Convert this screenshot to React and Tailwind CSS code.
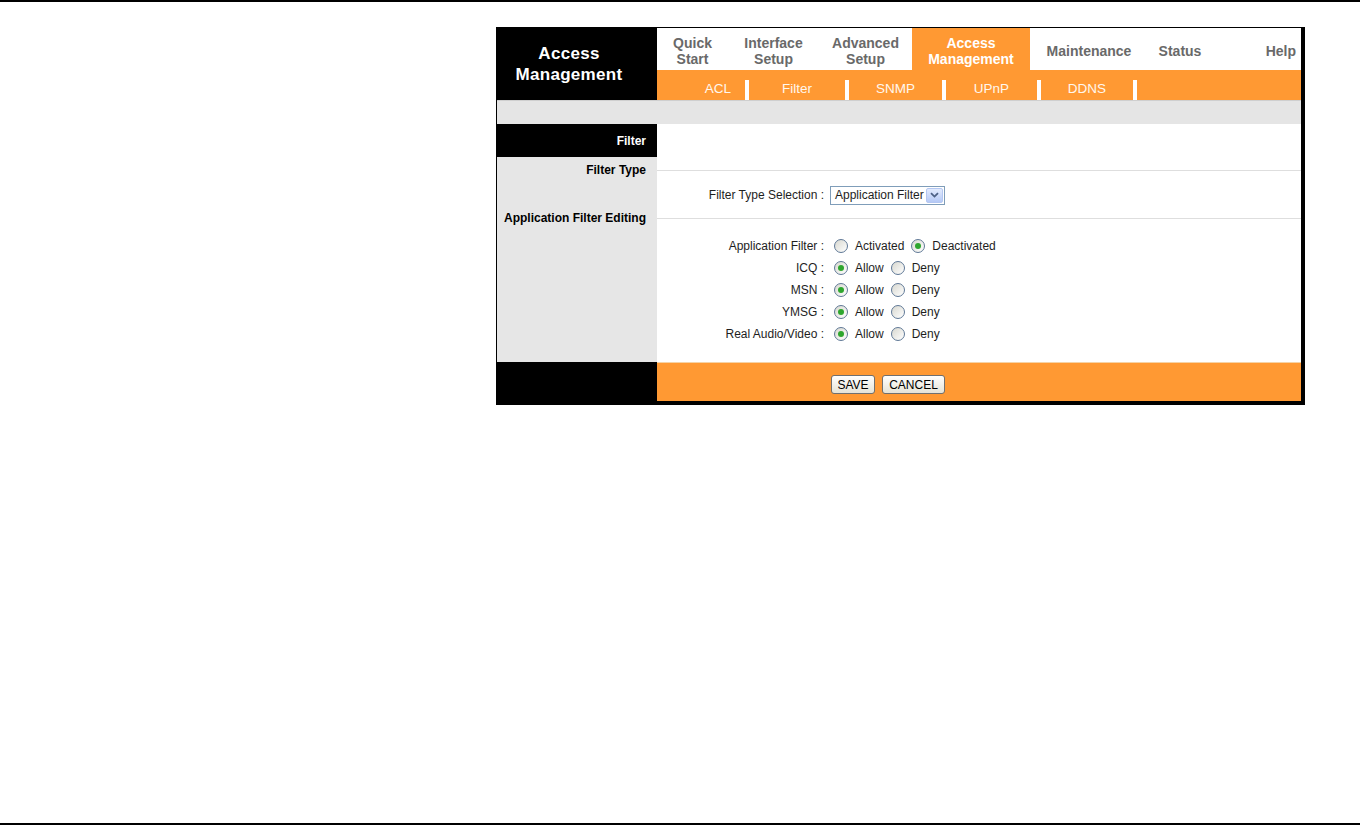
import React from "react";

const ORANGE = "bg-[#ff9933]";

const Radio = ({ checked }) => (
  <span className="inline-flex h-[14px] w-[14px] shrink-0 items-center justify-center rounded-full border border-[#5f7896] bg-gradient-to-br from-[#d8d8d0] to-white">
    {checked && <span className="h-[6px] w-[6px] rounded-full bg-[#2ea62e]" />}
  </span>
);

const RadioRow = ({ label, a, b, first }) => (
  <div className="flex h-[22px] items-center">
    <div className="w-[168px] pr-[1px] text-right">{label}</div>
    <div className="ml-[9px] flex items-center">
      <Radio checked={!first} />
      <span className="ml-[7px] mr-[7px]">{a}</span>
      <Radio checked={first} />
      <span className="ml-[7px]">{b}</span>
    </div>
  </div>
);

const Button = ({ children, w }) => (
  <button
    className={`h-[19px] ${w} rounded-[3px] border border-[#707070] bg-gradient-to-b from-white to-[#e6e3d6] text-[12px] leading-none text-black`}
  >
    {children}
  </button>
);

export default function App() {
  return (
    <div className="flex h-[825px] w-[1360px] flex-col bg-white font-['Liberation_Sans',Arial,sans-serif]">
      <div className="h-[2px] bg-black" />

      <div className="flex-1 pl-[496px] pt-[25px]">
        <div className="w-[809px] border-b-4 border-l border-r-4 border-t border-black">
          {/* header */}
          <div className="flex h-[72px]">
            <div className="flex w-[160px] items-center justify-center bg-black pr-[16px] text-center text-[17px] font-bold leading-[21px] tracking-[0.3px] text-white">
              Access
              <br />
              Management
            </div>
            <div className="flex flex-1 flex-col">
              <div className="flex h-[42px] text-[14px] font-bold leading-[16px] text-[#696969]">
                <div className="flex w-[71px] items-center justify-center pt-[3px] text-center">
                  Quick
                  <br />
                  Start
                </div>
                <div className="flex w-[91px] items-center justify-center pt-[3px] text-center">
                  Interface
                  <br />
                  Setup
                </div>
                <div className="flex w-[93px] items-center justify-center pt-[3px] text-center">
                  Advanced
                  <br />
                  Setup
                </div>
                <div className={`flex w-[118px] items-center justify-center ${ORANGE} pt-[3px] text-center text-white`}>
                  Access
                  <br />
                  Management
                </div>
                <div className="flex w-[118px] items-center justify-center pt-[3px]">Maintenance</div>
                <div className="flex w-[64px] items-center justify-center pt-[3px]">Status</div>
                <div className="flex flex-1 items-center justify-end pr-[5px] pt-[3px]">Help</div>
              </div>
              <div className={`flex h-[30px] ${ORANGE} text-[13.5px] leading-[15px] text-[#fff7ee]`}>
                <div className="w-[88px] pl-[34px] pt-[11px] text-center">ACL</div>
                <div className="mt-[10px] w-[4px] bg-white" />
                <div className="w-[96px] pt-[11px] text-center">Filter</div>
                <div className="mt-[10px] w-[4px] bg-white" />
                <div className="w-[93px] pt-[11px] text-center">SNMP</div>
                <div className="mt-[10px] w-[4px] bg-white" />
                <div className="w-[91px] pt-[11px] text-center">UPnP</div>
                <div className="mt-[10px] w-[4px] bg-white" />
                <div className="w-[92px] pt-[11px] text-center">DDNS</div>
                <div className="mt-[10px] w-[4px] bg-white" />
                <div className="flex-1" />
              </div>
            </div>
          </div>

          {/* gray bar */}
          <div className="h-[24px] border-t border-[#cfcfcf] bg-[#e5e5e5]" />

          {/* body */}
          <div className="flex text-[12px] text-[#1e1e1e]">
            <div className="flex w-[160px] flex-col bg-[#e6e6e6] text-right text-[12px] font-bold text-black">
              <div className="flex h-[33px] items-center justify-end bg-black pr-[11px] text-white">Filter</div>
              <div className="flex h-[26px] items-center justify-end pr-[11px]">Filter Type</div>
              <div className="h-[24px]" />
              <div className="flex h-[22px] items-center justify-end pr-[11px]">Application Filter Editing</div>
              <div className="flex-1" />
            </div>

            <div className="flex flex-1 flex-col">
              <div className="h-[33px]" />
              <div className="flex h-[26px] items-center">
                <div className="h-[1px] w-full bg-[#dedede]" />
              </div>
              <div className="flex h-[24px] items-center">
                <div className="w-[168px] pr-[1px] text-right">Filter Type Selection :</div>
                <div className="ml-[5px] flex h-[19px] w-[115px] items-center justify-between border border-[#7f9db9] bg-white pl-[4px] pr-[1px]">
                  <span>Application Filter</span>
                  <span className="flex h-[15px] w-[17px] items-center justify-center rounded-[2px] border border-[#b4c7f2] bg-gradient-to-b from-[#e3ebfd] to-[#b5c9f6]">
                    <svg width="9" height="6" viewBox="0 0 9 6">
                      <path d="M1 1.2 L4.5 4.6 L8 1.2" fill="none" stroke="#4d6185" strokeWidth="1.8" />
                    </svg>
                  </span>
                </div>
              </div>
              <div className="flex h-[22px] items-center">
                <div className="h-[1px] w-full bg-[#dedede]" />
              </div>
              <div className="h-[6px]" />
              <RadioRow label="Application Filter :" a="Activated" b="Deactivated" first />
              <RadioRow label="ICQ :" a="Allow" b="Deny" />
              <RadioRow label="MSN :" a="Allow" b="Deny" />
              <RadioRow label="YMSG :" a="Allow" b="Deny" />
              <RadioRow label="Real Audio/Video :" a="Allow" b="Deny" />
              <div className="h-[17px]" />
            </div>
          </div>

          {/* footer */}
          <div className="flex h-[39px]">
            <div className="w-[160px] bg-black" />
            <div className={`flex flex-1 items-start gap-[7px] border-t border-[#f6d3a6] ${ORANGE} pl-[174px] pt-[12px]`}>
              <Button w="w-[44px]">SAVE</Button>
              <Button w="w-[63px]">CANCEL</Button>
            </div>
          </div>
        </div>
      </div>

      <div className="h-[2px] bg-black" />
    </div>
  );
}
